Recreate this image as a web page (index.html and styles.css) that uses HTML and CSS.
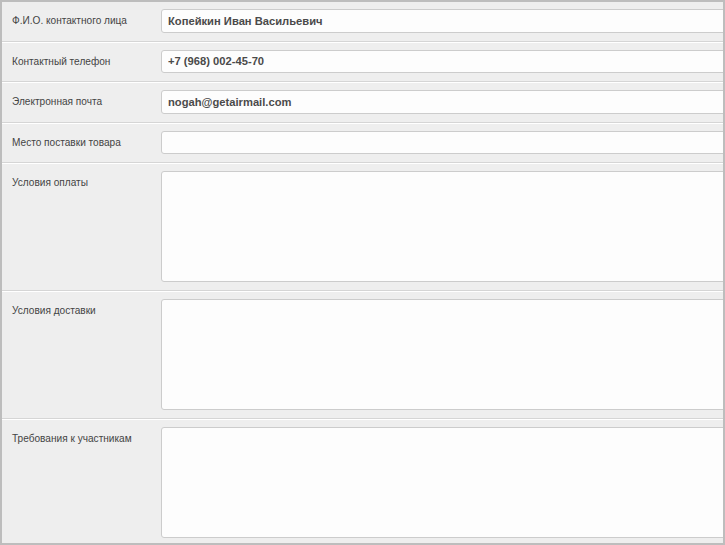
FILE: index.html
```html
<!DOCTYPE html>
<html lang="ru">
<head>
<meta charset="utf-8">
<title>Контактные данные</title>
<link rel="stylesheet" href="styles.css">
</head>
<body>
<div class="frame">
  <div class="row">
    <div class="label">Ф.И.О. контактного лица</div>
    <div class="field"><input class="input" type="text" value="Копейкин Иван Васильевич"></div>
  </div>
  <div class="row">
    <div class="label">Контактный телефон</div>
    <div class="field"><input class="input" type="text" value="+7 (968) 002-45-70"></div>
  </div>
  <div class="row">
    <div class="label">Электронная почта</div>
    <div class="field"><input class="input" type="text" value="nogah@getairmail.com"></div>
  </div>
  <div class="row">
    <div class="label">Место поставки товара</div>
    <div class="field"><input class="input" type="text" value=""></div>
  </div>
  <div class="row row-tall">
    <div class="label">Условия оплаты</div>
    <div class="field"><textarea class="area"></textarea></div>
  </div>
  <div class="row row-tall">
    <div class="label">Условия доставки</div>
    <div class="field"><textarea class="area"></textarea></div>
  </div>
  <div class="row row-tall">
    <div class="label">Требования к участникам</div>
    <div class="field"><textarea class="area"></textarea></div>
  </div>
</div>
</body>
</html>
```

FILE: styles.css
```css
html, body {
  margin: 0;
  padding: 0;
  background: #ffffff;
}
.frame {
  width: 725px;
  height: 545px;
  box-sizing: border-box;
  border: 2px solid #bdbdbd;
  background: #eeeeee;
  overflow: hidden;
  font-family: "Liberation Sans", Arial, sans-serif;
}
.row {
  display: grid;
  grid-template-columns: 159px 600px;
  padding: 7px 0 8px;
  border-top: 1px solid #ffffff;
  border-bottom: 1px solid #d5d5d5;
}
.row:first-child {
  border-top: none;
}
.label {
  padding-left: 10px;
  font-size: 10.1px;
  color: #444444;
  line-height: 23px;
}
.input,
.area {
  display: block;
  box-sizing: border-box;
  width: 600px;
  margin: 0;
  border: 1px solid #cccccc;
  border-radius: 3px;
  background: #fdfdfd;
  font-family: "Liberation Sans", Arial, sans-serif;
  font-size: 11.2px;
  font-weight: bold;
  color: #4a4a4a;
  outline: none;
}
.input {
  height: 23.5px;
  padding: 0 6px;
}
.area {
  height: 111px;
  resize: none;
  padding: 4px 6px;
}
```
